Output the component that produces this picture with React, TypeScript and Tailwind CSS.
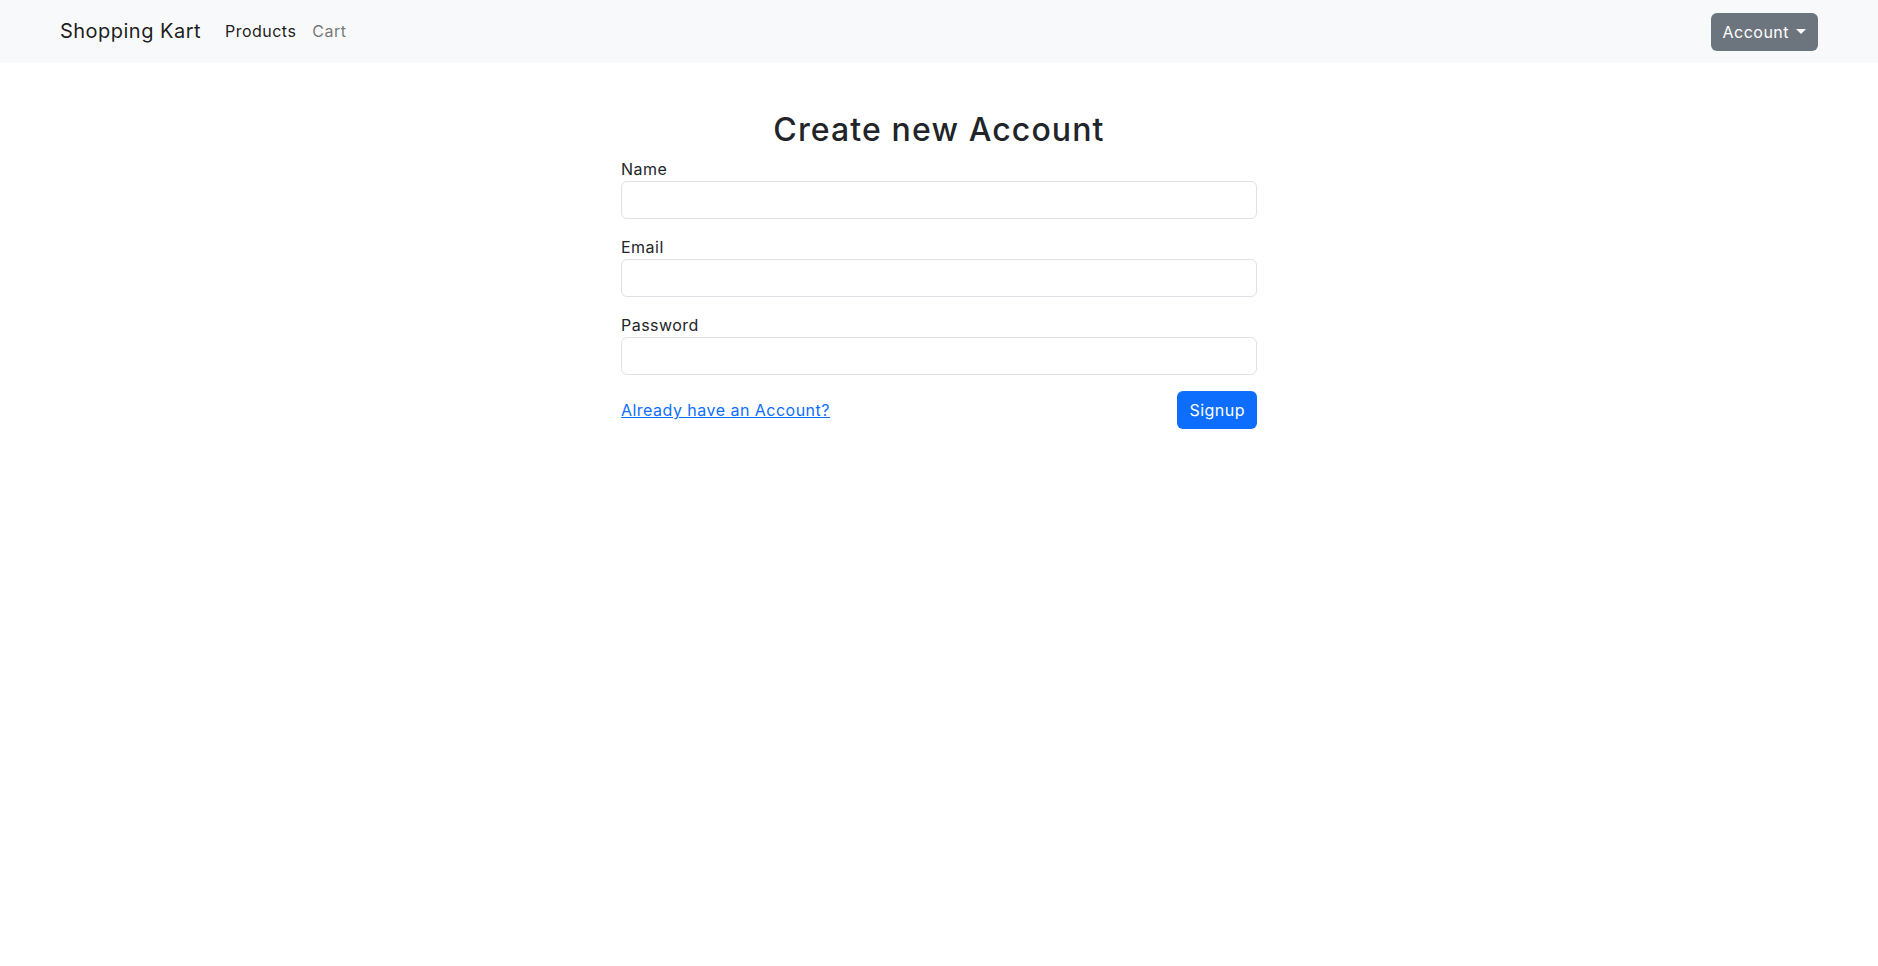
export default function App() {
  return (
    <div className="min-h-screen bg-white text-[#212529] tracking-[0.03em] [font-family:Inter,'Noto_Sans',sans-serif]">
      {/* Navbar */}
      <nav className="h-[63px] bg-[#f8f9fa] flex items-center px-[60px]">
        <a href="#" className="text-[20px] leading-[30px] text-black/90 mr-4 -mt-px">Shopping Kart</a>
        <div className="flex items-center text-[16px] leading-6 -mt-px">
          <a href="#" className="px-2 text-black/90">Products</a>
          <a href="#" className="px-2 text-black/55">Cart</a>
        </div>
        <div className="flex-1" />
        <button className="h-[38px] px-3 rounded-md bg-[#6c757d] text-white text-[16px] leading-6 flex items-center">
          Account
          <span className="ml-[7px] inline-block w-0 h-0 border-x-[5px] border-x-transparent border-t-[5px] border-t-white" />
        </button>
      </nav>

      {/* Form */}
      <main className="flex justify-center mt-12">
        <div className="w-[636px]">
          <h2 className="text-[32px] leading-[38.4px] font-medium tracking-[0.035em] text-center mb-2">Create new Account</h2>
          {['Name', 'Email', 'Password'].map(label => (
            <div key={label} className="mb-4">
              <label className="block text-[16px] leading-6">{label}</label>
              <input
                type={label === 'Password' ? 'password' : label === 'Email' ? 'email' : 'text'}
                className="block w-full h-[38px] px-3 rounded-md border border-[#dee2e6] bg-white outline-none"
              />
            </div>
          ))}
          <div className="flex items-center justify-between">
            <a href="#" className="text-[16px] leading-6 text-[#0d6efd] underline">Already have an Account?</a>
            <button className="h-[38px] px-3 rounded-md bg-[#0d6efd] text-white text-[16px] leading-6">Signup</button>
          </div>
        </div>
      </main>
    </div>
  )
}
